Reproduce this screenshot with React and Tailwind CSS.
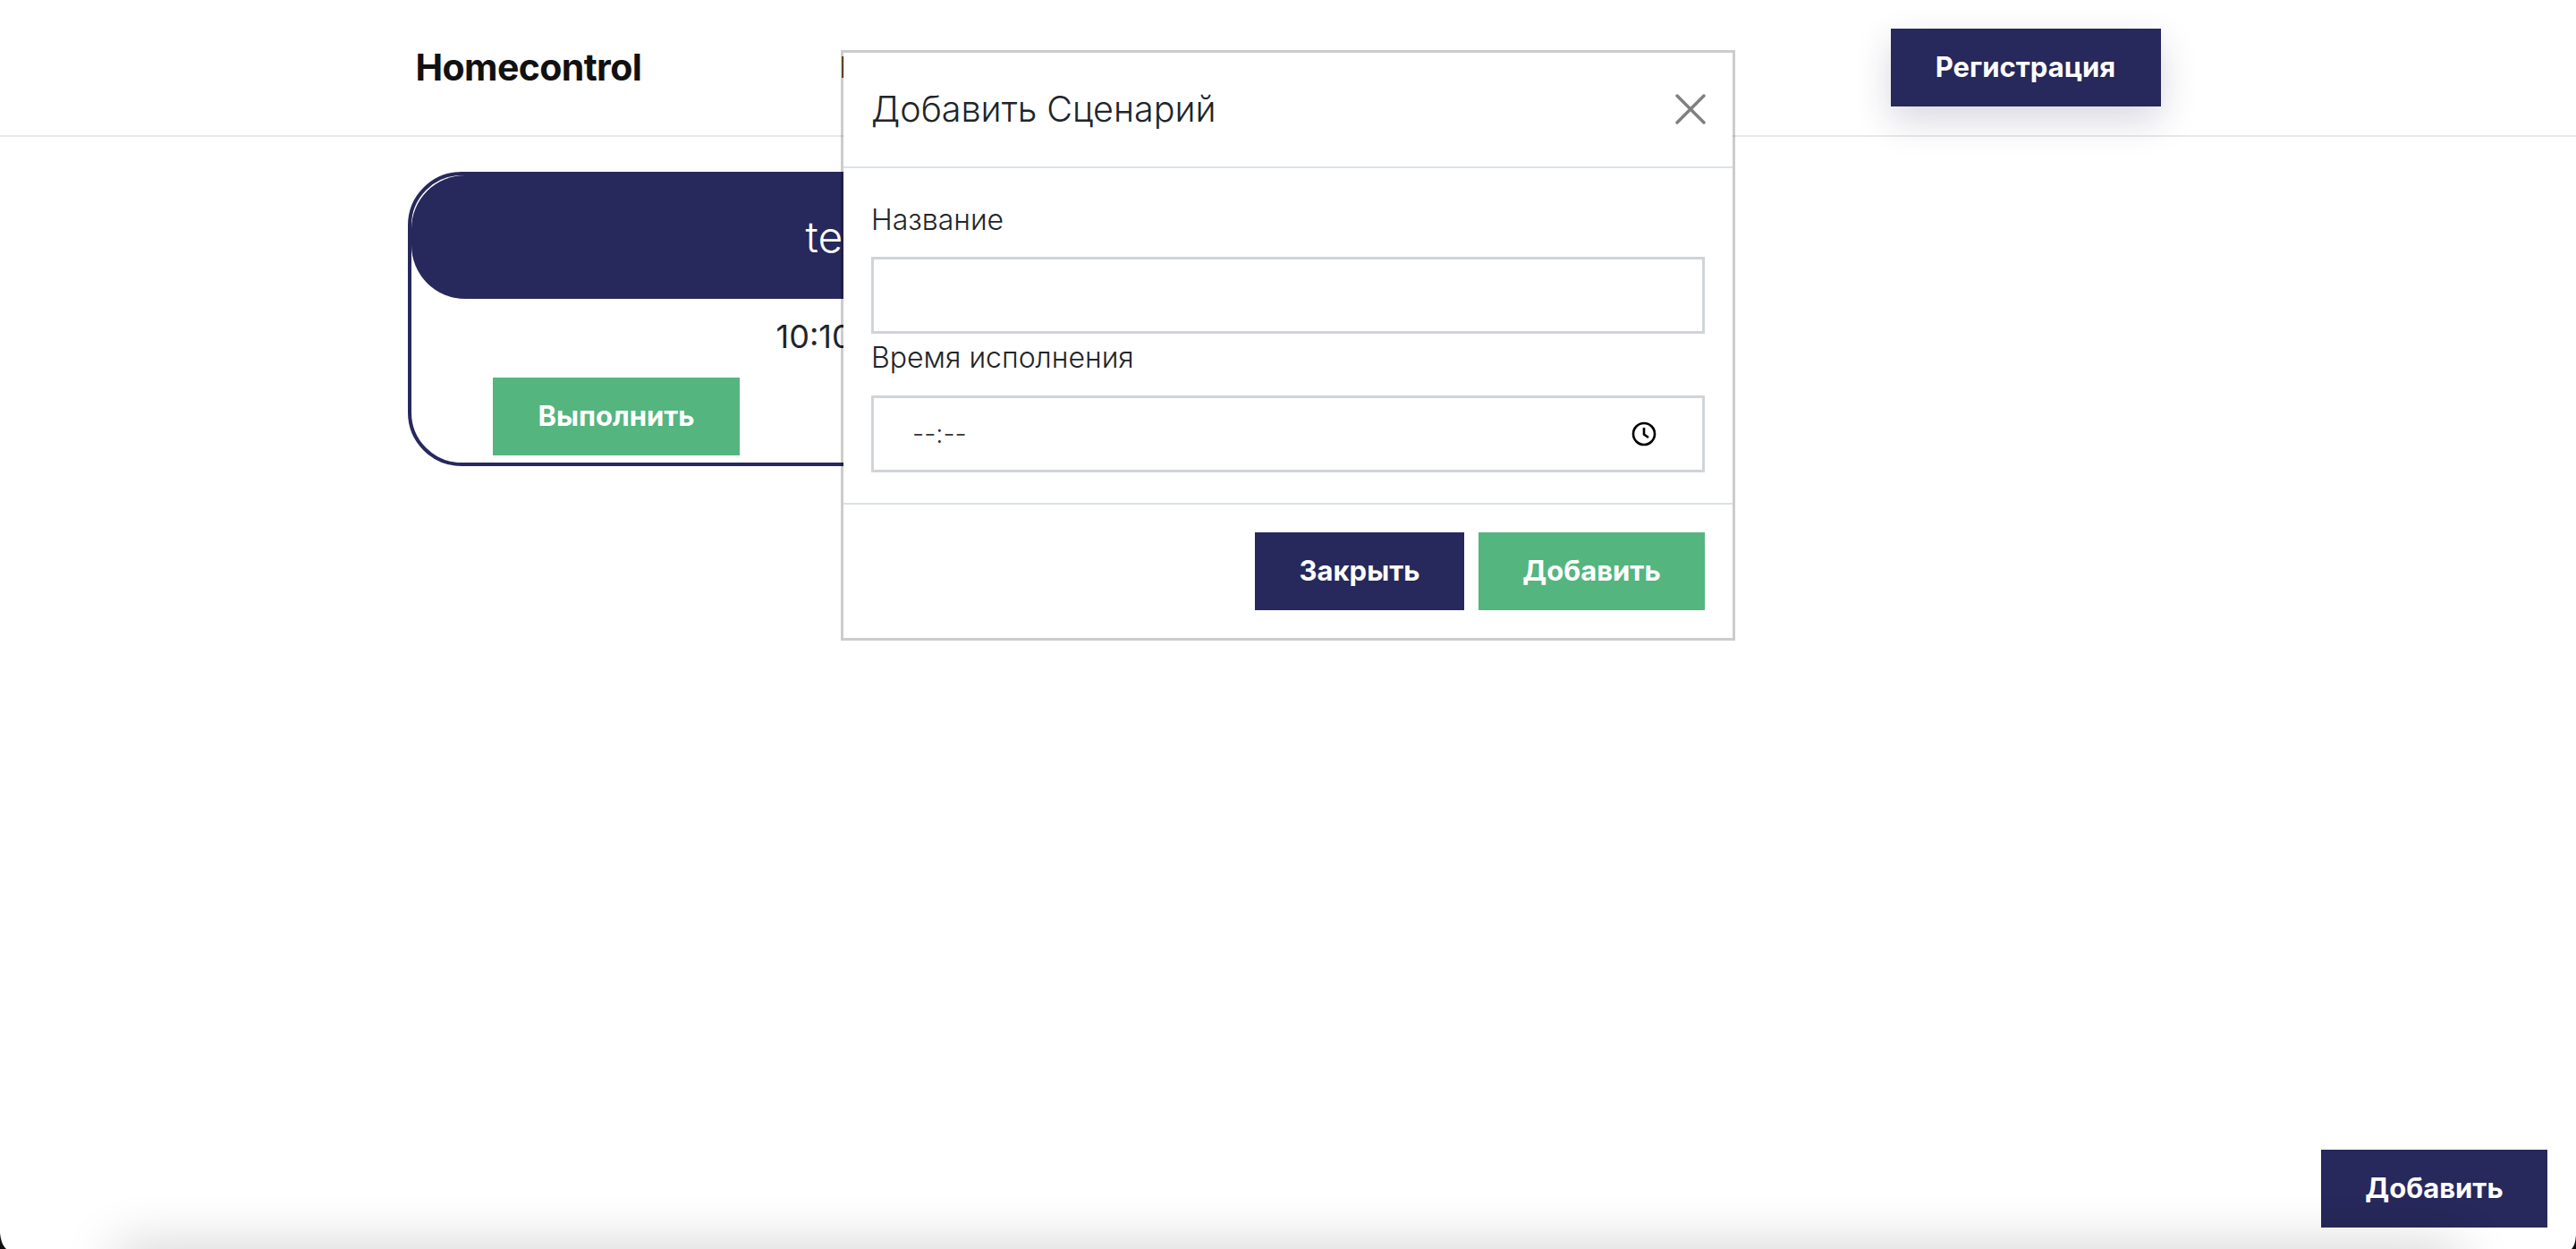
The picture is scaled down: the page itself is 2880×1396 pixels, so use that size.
import React from 'react';

function App() {
  return (
    <div className="relative h-screen overflow-hidden bg-white font-[Inter,sans-serif] text-[#212529]">
      {/* Navbar */}
      <header className="h-[153px] border-b-2 border-[#e8e8e8]">
        <div className="mx-auto flex h-full w-[1951px] items-center">
          <span className="w-[474px] text-[41px] font-bold tracking-[-0.6px] text-[#111]">Homecontrol</span>
          <span className="text-[32px] text-[#333]">Главная</span>
          <button className="ml-auto h-[87px] w-[302px] bg-[#27285b] text-[31px] font-bold text-white shadow-[0_16px_40px_rgba(39,40,91,0.18)]">
            Регистрация
          </button>
        </div>
      </header>

      {/* Scenario card */}
      <main className="mx-auto w-[1968px] pt-[39px]">
        <div className="h-[329px] w-[978px] rounded-[60px] border-4 border-[#27285b]">
          <div className="flex h-[138px] items-center justify-center rounded-[60px] bg-[#27285b] pr-[8px] text-[48px] font-light text-white">
            test
          </div>
          <div className="mt-[20px] pr-[14px] text-center text-[36px] leading-[44px]">10:10:00</div>
          <div className="mt-[24px] flex justify-between px-[91px]">
            <button className="h-[87px] w-[276px] bg-[#54b57f] text-[31px] font-bold text-white">Выполнить</button>
            <button className="h-[87px] w-[276px] bg-[#27285b] text-[31px] font-bold text-white">Удалить</button>
          </div>
        </div>
      </main>

      <button className="fixed right-[32px] bottom-[24px] h-[87px] w-[253px] bg-[#27285b] text-[31px] font-bold text-white">
        Добавить
      </button>

      {/* Modal */}
      <div className="fixed top-[56px] left-[940px] w-[1000px] border-[3px] border-black/20 bg-white bg-clip-padding">
        <div className="flex h-[129px] items-center justify-between border-b-2 border-[#dee2e6] px-[31px]">
          <h5 className="text-[39.5px] font-light text-[#212529]">Добавить Сценарий</h5>
          <svg width="36" height="36" viewBox="0 0 36 36" className="mt-[-2px] mr-[-2px]" fill="none" stroke="#808080" strokeWidth="3.5" strokeLinecap="round">
            <path d="M3 3 L33 33 M33 3 L3 33" />
          </svg>
        </div>
        <div className="px-[31px] pt-[33px] pb-[34px]">
          <label className="mb-[16px] block text-[32px] leading-[50px] font-light">Название</label>
          <input type="text" className="block h-[86px] w-full border-[3px] border-[#d0d4d8] bg-white" />
          <label className="mb-[16px] block text-[32px] leading-[53px] font-light">Время исполнения</label>
          <div className="flex h-[86px] w-full items-center justify-between border-[3px] border-[#d0d4d8] bg-white pr-[51px] pl-[43px]">
            <span className="text-[29px] font-light text-[#333]">--:--</span>
            <svg width="28" height="28" viewBox="0 0 28 28" className="mt-[-1px]" fill="none" stroke="#000" strokeWidth="2.6">
              <circle cx="14" cy="14" r="12" />
              <path d="M14 7 V14.5 L19 18" />
            </svg>
          </div>
        </div>
        <div className="flex justify-end gap-[16px] border-t-2 border-[#dee2e6] px-[31px] py-[31px]">
          <button className="h-[87px] w-[234px] bg-[#27285b] text-[31px] font-bold text-white">Закрыть</button>
          <button className="h-[87px] w-[253px] bg-[#54b57f] text-[31px] font-bold text-white">Добавить</button>
        </div>
      </div>

      {/* Window shadow and corners along the bottom edge */}
      <div className="absolute right-[130px] bottom-[-40px] left-[130px] h-[40px] shadow-[0_0_60px_rgba(0,0,0,0.22)]" />
      <svg width="8" height="18" viewBox="0 0 8 18" className="absolute bottom-0 left-0">
        <path d="M0 0 C1 9 3 14 7 18 L0 18 Z" fill="#111" />
      </svg>
      <svg width="5" height="16" viewBox="0 0 5 16" className="absolute right-0 bottom-0">
        <path d="M5 0 C4.5 8 3 13 0 16 L5 16 Z" fill="#111" />
      </svg>
    </div>
  );
}

export default App;
